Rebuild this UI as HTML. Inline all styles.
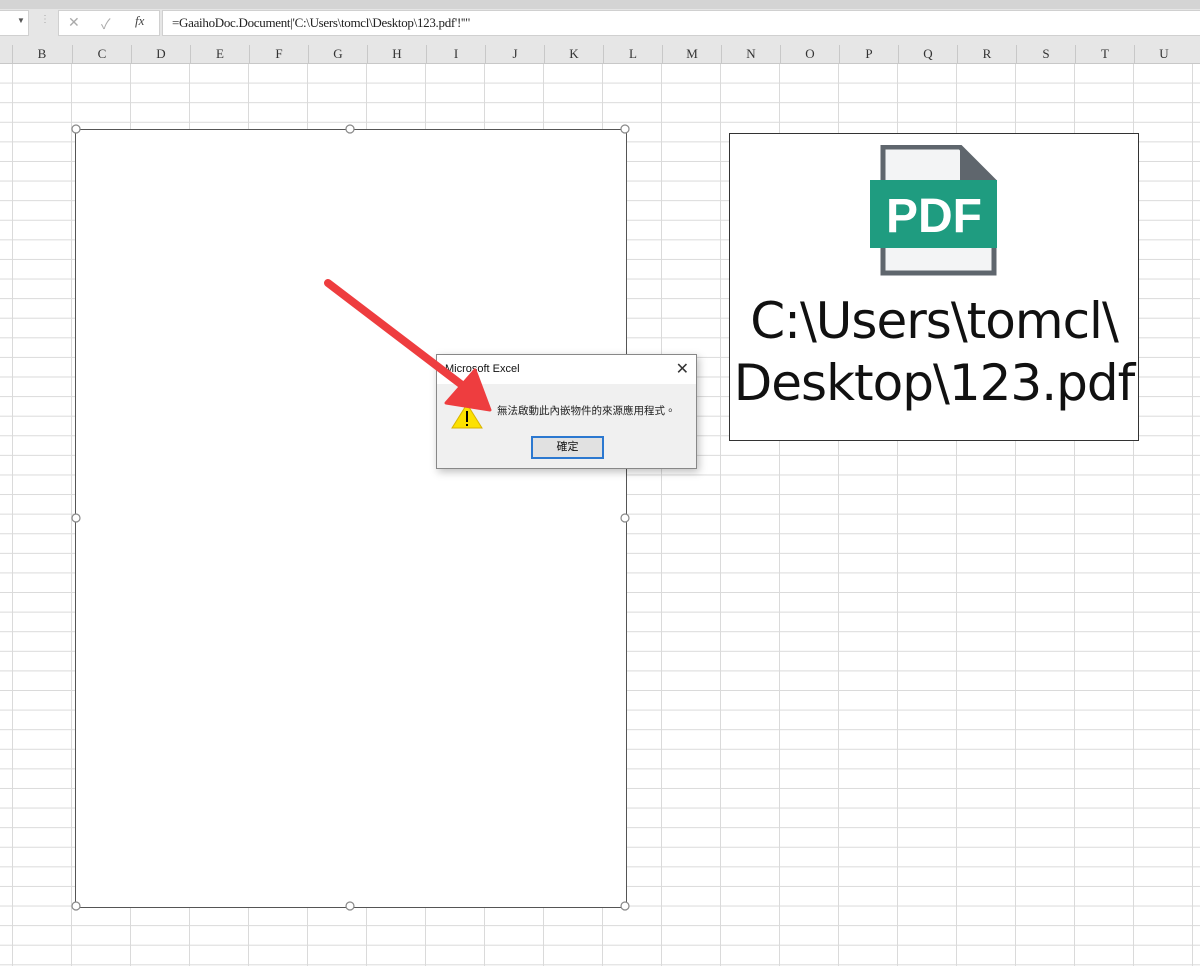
<!DOCTYPE html>
<html><head><meta charset="utf-8"><style>
body{margin:0;width:1200px;height:966px;overflow:hidden;position:relative;font-family:"Liberation Sans","Noto Sans CJK TC",sans-serif;background:#fff}
.grid{position:absolute;left:0;top:63px;width:1200px;height:903px;
background-image:linear-gradient(to right,#dadada 1px,transparent 1px),linear-gradient(to bottom,#dadada 1px,transparent 1px);
background-size:59px 19.6px;background-position:12px 0,0 0}
.top{position:absolute;left:0;top:0;width:1200px;height:63px;background:#e6e6e6}
.hdr{position:absolute;top:45px;height:18px;font-family:"Liberation Serif",serif;font-size:13px;color:#333;text-align:center;line-height:18px;border-left:1px solid #c8c8c8;width:58px}
</style></head><body>
<div class="grid"></div>
<div class="top">
 <div style="position:absolute;left:0;top:0;width:1200px;height:9px;background:#d4d4d4"></div>
 <div style="position:absolute;left:0;top:10px;width:28px;height:24px;background:#fff;border:1px solid #d0d0d0;border-left:none"></div>
 <div style="position:absolute;left:17px;top:16px;font-size:8px;color:#555">▼</div>
 <div style="position:absolute;left:40px;top:14px;font-size:10px;color:#aaa">⋮</div>
 <div style="position:absolute;left:58px;top:10px;width:100px;height:24px;background:#fff;border:1px solid #d0d0d0"></div>
 <div style="position:absolute;left:68px;top:14px;font-size:14px;color:#aaa">✕</div>
 <div style="position:absolute;left:101px;top:14px;font-size:14px;color:#aaa">✓</div>
 <div style="position:absolute;left:135px;top:13px;font-size:13px;font-style:italic;font-family:'Liberation Serif',serif;color:#444">fx</div>
 <div style="position:absolute;left:162px;top:10px;width:1040px;height:24px;background:#fff;border:1px solid #d0d0d0"></div>
 <div style="position:absolute;left:172px;top:15px;font-size:13px;font-family:'Liberation Serif',serif;color:#222;letter-spacing:-0.3px">=GaaihoDoc.Document|'C:\Users\tomcl\Desktop\123.pdf'!''"</div>
 <div style="position:absolute;left:0;top:63px;width:1200px;height:1px;background:#c8c8c8"></div>
</div>
<div class="hdr" style="left:12px">B</div><div class="hdr" style="left:72px">C</div><div class="hdr" style="left:131px">D</div><div class="hdr" style="left:190px">E</div><div class="hdr" style="left:249px">F</div><div class="hdr" style="left:308px">G</div><div class="hdr" style="left:367px">H</div><div class="hdr" style="left:426px">I</div><div class="hdr" style="left:485px">J</div><div class="hdr" style="left:544px">K</div><div class="hdr" style="left:603px">L</div><div class="hdr" style="left:662px">M</div><div class="hdr" style="left:721px">N</div><div class="hdr" style="left:780px">O</div><div class="hdr" style="left:839px">P</div><div class="hdr" style="left:898px">Q</div><div class="hdr" style="left:957px">R</div><div class="hdr" style="left:1016px">S</div><div class="hdr" style="left:1075px">T</div><div class="hdr" style="left:1134px">U</div>

<div style="position:absolute;left:75px;top:129px;width:550px;height:777px;background:#fff;border:1px solid #555"></div>
<svg style="position:absolute;left:0;top:0" width="1200" height="966">
 <g fill="#fff" stroke="#888" stroke-width="1.2">
  <circle cx="76" cy="129" r="4"/><circle cx="350" cy="129" r="4"/><circle cx="625" cy="129" r="4"/>
  <circle cx="76" cy="518" r="4"/><circle cx="625" cy="518" r="4"/>
  <circle cx="76" cy="906" r="4"/><circle cx="350" cy="906" r="4"/><circle cx="625" cy="906" r="4"/>
 </g>
</svg>

<div style="position:absolute;left:729px;top:133px;width:408px;height:306px;background:#fff;border:1px solid #333"></div>
<svg style="position:absolute;left:868px;top:145px" width="132" height="132">
 <path d="M15 2 H92 L126 36 V128 H15 Z" fill="#f3f4f5" stroke="#5f666d" stroke-width="5"/>
 <path d="M92 2 V36 H126" fill="#5f666d"/>
 <rect x="2" y="35" width="127" height="68" fill="#1f9c80"/>
 <text x="66" y="87" text-anchor="middle" font-family="Liberation Sans,sans-serif" font-weight="bold" font-size="48" fill="#fff">PDF</text>
</svg>
<div style="position:absolute;left:729px;top:290px;width:410px;text-align:center;font-family:'DejaVu Sans',sans-serif;font-size:50px;line-height:62px;color:#111;letter-spacing:-1px">C:\Users\tomcl\<br>Desktop\123.pdf</div>

<div style="position:absolute;left:436px;top:354px;width:259px;height:113px;background:#f0f0f0;border:1px solid #888;box-shadow:2px 3px 8px rgba(0,0,0,.25)">
 <div style="height:29px;background:#fff;font-size:11px;line-height:29px;padding-left:8px;color:#111">Microsoft Excel<span style="position:absolute;right:7px;top:0;font-size:16px;color:#333">✕</span></div>
 <svg style="position:absolute;left:14px;top:48px" width="32" height="26"><path d="M16 1 L31 25 H1 Z" fill="#fce100" stroke="#d9b400"/><rect x="15" y="8" width="2" height="11" fill="#000"/><rect x="15" y="21" width="2" height="2" fill="#000"/></svg>
 <div style="position:absolute;left:60px;top:48px;font-size:10.5px;color:#222">無法啟動此內嵌物件的來源應用程式。</div>
 <div style="position:absolute;left:94px;top:81px;width:69px;height:19px;border:2px solid #2b78d0;background:#e1e1e1;font-size:11px;text-align:center;line-height:19px;color:#111">確定</div>
</div>

<svg style="position:absolute;left:0;top:0" width="1200" height="966">
 <line x1="328" y1="283" x2="462" y2="385" stroke="#ee3d3f" stroke-width="8" stroke-linecap="round"/>
 <path d="M490 410 L446 403 L475 370 Z" fill="#ee3d3f" stroke="#ee3d3f" stroke-width="3" stroke-linejoin="round"/>
</svg>
</body></html>
